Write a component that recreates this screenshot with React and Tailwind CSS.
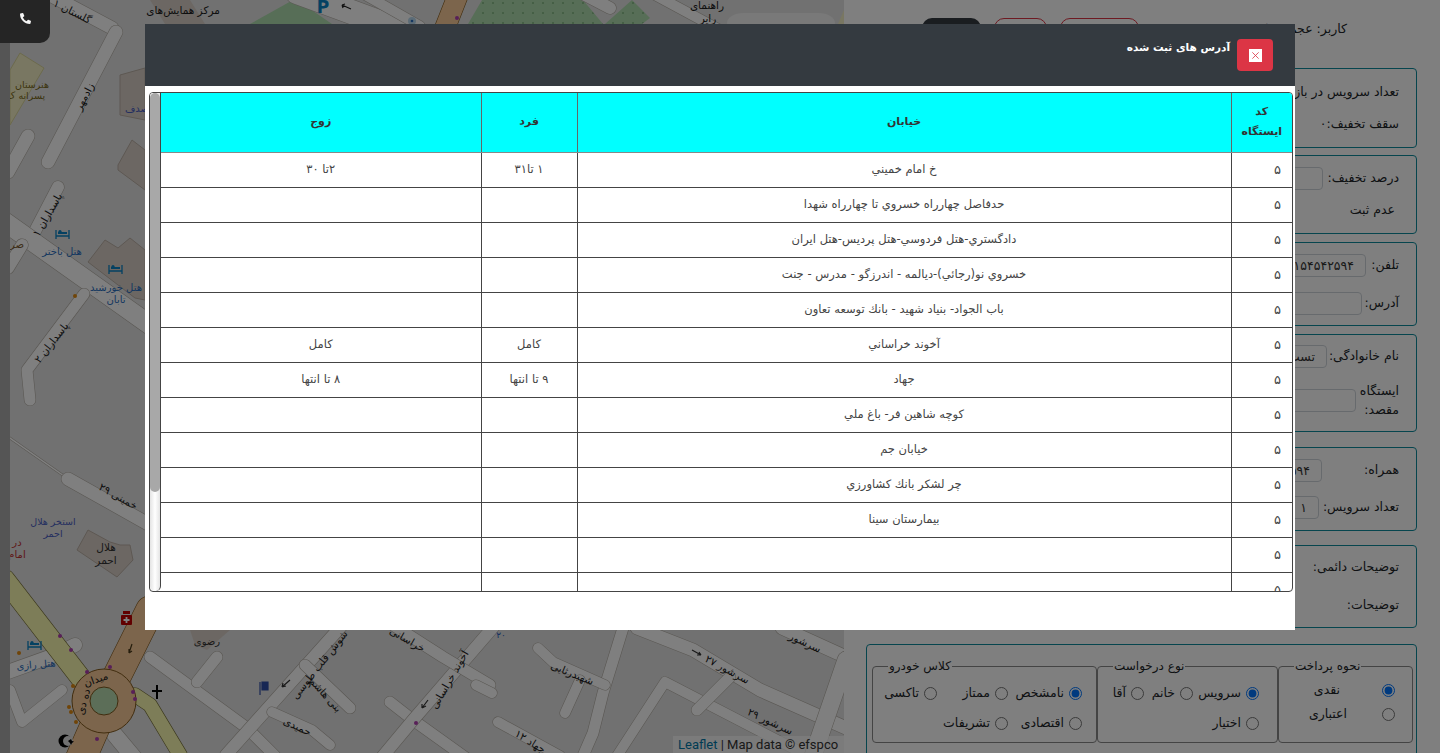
import React from "react";
import { FaPhoneAlt } from "react-icons/fa";

function Road({ d, w = 12, color = "#ffffff", casing = "#b5b0a8" }) {
  return (
    <g fill="none" strokeLinecap="round" strokeLinejoin="round">
      <path d={d} stroke={casing} strokeWidth={w + 1.2} />
      <path d={d} stroke={color} strokeWidth={w} />
    </g>
  );
}

function Label({ x, y, r = 0, size = 11, color = "#1c1c1c", children }) {
  return (
    <text
      x={x}
      y={y}
      transform={`rotate(${r} ${x} ${y})`}
      textAnchor="middle"
      dominantBaseline="middle"
      fontSize={size}
      fill={color}
      fontFamily="'DejaVu Sans', sans-serif"
    >
      {children}
    </text>
  );
}

function Bed({ x, y }) {
  return (
    <g stroke="#0a83c4" fill="none" strokeWidth="1.3">
      <path d={`M${x} ${y - 5}v9M${x + 13} ${y - 5}v9M${x} ${y + 1}h13`} />
      <rect x={x + 2} y={y - 3} width="9" height="2" fill="#0a83c4" stroke="none" />
      <circle cx={x + 4} cy={y - 3.5} r="1.6" fill="#0a83c4" stroke="none" />
    </g>
  );
}

function Dot({ x, y, c = "#b03fb0" }) {
  return <circle cx={x} cy={y} r="2" fill={c} />;
}

function MapCanvas() {
  return (
    <svg viewBox="10 0 834 753" className="block w-full h-full">
      <defs>
        <pattern id="dots" width="10" height="10" patternUnits="userSpaceOnUse">
          <rect width="10" height="10" fill="#aedcae" />
          <circle cx="3" cy="3" r="0.8" fill="#5f9a5f" />
        </pattern>
      </defs>
      <rect x="10" y="0" width="834" height="753" fill="#e2e2e2" />

      <polygon points="20,53 44,68 10,125 10,70" fill="#f2efc4" stroke="#d8d49a" />
      <polygon points="150,0 190,0 205,24 165,24" fill="#d9cfc6" />
      <polygon points="250,24 293,0 297,0 332,24" fill="#aedcae" />
      <polygon points="468,24 482,0 583,0 603,24" fill="url(#dots)" />
      <polygon points="605,24 632,0 650,18 642,24" fill="url(#dots)" />
      <polygon points="120,75 145,68 145,120 120,115" fill="#d9cfc6" stroke="#bbb0a6" />
      <polygon points="118,165 132,140 145,150 145,190 118,170" fill="#d9cfc6" stroke="#bbb0a6" />
      <polygon points="88,262 105,240 118,248 130,238 145,250 145,300 135,298" fill="#d9cfc6" stroke="#bbb0a6" />
      <polygon points="88,530 77,550 117,577 133,560 130,545 120,545 110,542" fill="#d9cfc6" stroke="#bbb0a6" />
      <polygon points="190,630 230,630 207,650 195,645" fill="#d9cfc6" />
      <polygon points="838,24 844,10 844,24" fill="#f2efc4" />

      <Road d="M50 -5L112 28" w={13} />
      <Road d="M116 32L48 162" w={13} />
      <Road d="M28 136L8 172" w={13} />
      <Road d="M58 187L33 235" w={12} />
      <Road d="M5 222L150 325" w={19} />
      <Road d="M22 245L8 268" w={12} />
      <Road d="M84 294L27 370L30 400" w={11} />
      <Road d="M10 438L64 476" w={1.5} />
      <Road d="M68 479L150 525" w={13} />
      <Road d="M5 673L55 655L75 645" w={14} />
      <Road d="M10 690L22 722L62 690" w={10} />
      <Road d="M150 657L247 728L275 756" w={11} />
      <Road d="M217 657L197 682" w={11} />
      <Road d="M226 755L345 622" w={12} />
      <Road d="M305 665L350 708" w={11} />
      <Road d="M272 712L312 730L330 745" w={10} />
      <Road d="M115 735L140 765" w={16} />
      <Road d="M390 702L413 720L480 768" w={11} />
      <Road d="M383 756L413 720L495 625" w={12} />
      <Road d="M393 625L443 657L490 685" w={11} />
      <Road d="M637 628L693 650L760 690L846 728" w={13} />
      <Road d="M782 628L846 657" w={13} />
      <Road d="M623 628L603 693L593 733L583 756" w={11} />
      <Road d="M538 648L553 662L605 685" w={10} />
      <Road d="M580 680L565 713" w={10} />
      <Road d="M476 685L492 693" w={10} />
      <Road d="M498 722L560 756" w={10} />
      <Road d="M617 756L665 682L835 770" w={10} />
      <Road d="M730 677L697 710" w={11} />
      <Road d="M846 660L813 756" w={17} />
      <Road d="M297 -8L395 28" w={24} />
      <Road d="M360 -8L420 26" w={10} />
      <Road d="M585 -5L610 8" w={12} />
      <Road d="M655 -5L720 30" w={10} />

      <Road d="M5 580L90 690" w={20} color="#fbfbb0" casing="#77703a" />
      <Road d="M135 695L150 705L180 755" w={14} color="#fbfbb0" casing="#77703a" />
      <Road d="M150 610L115 680" w={28} color="#f9cb98" casing="#825a1e" />
      <Road d="M100 715L78 765" w={30} color="#f9cb98" casing="#825a1e" />
      <Road d="M458 -5L445 28" w={20} color="#f9cb98" casing="#825a1e" />
      <circle cx="104" cy="701" r="32" fill="#f9cb98" stroke="#825a1e" strokeWidth="1" />
      <circle cx="104" cy="701" r="14" fill="#b8dcb0" stroke="#825a1e" strokeWidth="1" />

      <Dot x={60} y={636} />
      <Dot x={71} y={650} />
      <Dot x={87} y={672} />
      <Dot x={110} y={667} />
      <Dot x={133} y={692} />
      <Dot x={135} y={699} />
      <Dot x={97} y={739} />
      <Dot x={416} y={723} />
      <Dot x={457} y={18} />
      <Dot x={75} y={296} c="#e08a10" />
      <Dot x={19} y={653} c="#e08a10" />
      <Dot x={73} y={686} c="#e08a10" />
      <Dot x={69} y={707} c="#e08a10" />
      <Dot x={71} y={712} c="#e08a10" />
      <Dot x={76} y={722} c="#e08a10" />
      <circle cx="412" cy="21" r="4" fill="#b8d8ee" />
      <circle cx="412" cy="21" r="1.3" fill="#2a6ec0" />
      <Bed x={56} y={235} />
      <Bed x={109} y={270} />
      <Bed x={28} y={646} />
      <rect x="121" y="615" width="11" height="10" rx="1" fill="#c20000" />
      <rect x="123" y="611" width="7" height="3" fill="#c20000" />
      <path d="M126.5 617v6M123.5 620h6" stroke="#fff" strokeWidth="1.8" />
      <path d="M157 685v14M152 691h10" stroke="#000" strokeWidth="2" fill="none" />
      <path d="M262 682h6v8h-6zM260 682v13" stroke="#2f4fa8" fill="#2f4fa8" strokeWidth="1.2" />
      <circle cx="65" cy="741" r="6.5" fill="#000" />
      <circle cx="68" cy="741" r="5" fill="#e2e2e2" />
      <path d="M68 741l3 -2l1 2l2 .5l-2 1.5l-1 2l-1 -2z" fill="#000" />
      <text x="323" y="13" fontSize="17" fontWeight="700" fill="#0a83c4" textAnchor="middle" fontFamily="'DejaVu Sans', sans-serif">P</text>
      <path d="M342 5l9 4M342 5l3 -1M342 5l1 3" stroke="#222" fill="none" strokeWidth="1.2" />
      <path d="M132 644l-3 9M129 653l0 -4M129 653l3 -2" stroke="#4a3a1a" fill="none" strokeWidth="1.2" />
      <path d="M290 680l-8 7M282 687l1 -4M282 687l4 -1" stroke="#333" fill="none" strokeWidth="1.2" />
      <path d="M428 700l-6 8M422 708l0 -4M422 708l4 -2" stroke="#333" fill="none" strokeWidth="1.2" />
      <path d="M692 650l9 5M701 655l-4 0M701 655l-2 -3" stroke="#333" fill="none" strokeWidth="1.2" />
      <rect x="727" y="13" width="108" height="20" rx="16" fill="#f2f2f2" />

      <Label x={183} y={11} size={10.5}>مرکز همایش‌های</Label>
      <Label x={707} y={6} size={10.5}>راهنمای</Label>
      <Label x={708} y={19} size={10.5}>رایر</Label>
      <Label x={72} y={12} r={27} size={10.5}>گلستان ۱</Label>
      <Label x={85} y={97} r={-62} size={10.5}>زادمهر</Label>
      <Label x={48} y={215} r={-60} size={10.5}>پاسداران ۱</Label>
      <Label x={52} y={343} r={-52} size={10.5}>پاسداران ۲</Label>
      <Label x={32} y={85} size={9.5} color="#7a6a1a">هنرستان</Label>
      <Label x={26} y={96} size={9.5} color="#7a6a1a">پسرانه ک</Label>
      <Label x={137} y={109} size={10} color="#4a5ec0">صدف</Label>
      <Label x={62} y={252} size={10} color="#2a6ec0">هتل باختر</Label>
      <Label x={116} y={288} size={10} color="#2a6ec0">هتل خورشید</Label>
      <Label x={116} y={300} size={10} color="#2a6ec0">تابان</Label>
      <Label x={17} y={245} size={10} color="#7a5a30">صر</Label>
      <Label x={118} y={497} r={29} size={10.5}>خمینی ۲۹</Label>
      <Label x={53} y={522} size={9.5} color="#4a5ec0">استخر هلال</Label>
      <Label x={53} y={534} size={9.5} color="#4a5ec0">احمر</Label>
      <Label x={106} y={548} size={10.5} color="#333">هلال</Label>
      <Label x={106} y={561} size={10.5} color="#333">احمر</Label>
      <Label x={17} y={543} size={10} color="#c03030">در</Label>
      <Label x={17} y={555} size={10} color="#c03030">امام</Label>
      <Label x={36} y={665} r={-5} size={10} color="#2a6ec0">هتل رازی</Label>
      <Label x={96} y={680} r={-20} size={10.5}>میدان</Label>
      <Label x={84} y={702} r={-75} size={10.5}>ده دی</Label>
      <Label x={207} y={642} size={10} color="#333">رضوی</Label>
      <Label x={320} y={665} r={-52} size={10.5}>شوش قلب طوسی</Label>
      <Label x={325} y={695} r={48} size={10.5}>بنی هاشم</Label>
      <Label x={297} y={727} r={25} size={10.5}>حمیدی</Label>
      <Label x={407} y={640} r={30} size={10.5}>خراسانی</Label>
      <Label x={450} y={680} r={-60} size={10.5}>آخوند خراسانی</Label>
      <Label x={572} y={674} r={22} size={10.5}>شهیدرثایی</Label>
      <Label x={727} y={670} r={28} size={10.5}>سرشور ۲۷</Label>
      <Label x={805} y={643} r={25} size={10.5}>سرشور</Label>
      <Label x={770} y={722} r={25} size={10.5}>سرشور ۲۹</Label>
      <Label x={530} y={742} r={32} size={10.5}>جهاد ۱۲</Label>
      <Label x={501} y={635} size={9} color="#2a5ec0">۲۰</Label>
    </svg>
  );
}

function Field({ children, className }) {
  return (
    <div className={"w-full border border-[#0d8a9c] rounded-[4px] pr-[17px] overflow-hidden flex flex-col " + className}>
      {children}
    </div>
  );
}

function Input({ value, className }) {
  return (
    <div className={"h-[23px] shrink-0 border border-[#ced4da] rounded-[4px] text-[12.5px] leading-[21px] px-[11px] text-[#333] overflow-hidden whitespace-nowrap " + className}>
      {value}
    </div>
  );
}

function Radio({ label, checked, className, gap }) {
  return (
    <label className={"flex items-center leading-[16px] text-[12.5px] text-[#212529] whitespace-nowrap " + (gap || "gap-[5px]") + " " + (className || "")}>
      <input type="radio" readOnly checked={!!checked} className="m-0 w-[13px] h-[13px] shrink-0 accent-[#0075ff]" />
      <span>{label}</span>
    </label>
  );
}

function Legend({ title, className, children }) {
  return (
    <fieldset className={"min-w-0 shrink-0 border border-[#888] rounded-[4px] h-[85px] " + className}>
      <legend className="px-[1px] mr-auto ml-[15px] text-[12px] leading-[16px] text-[#212529]">{title}</legend>
      {children}
    </fieldset>
  );
}

const rows = [
  ["۵", "خ امام خميني", "۱ تا۳۱", "۲تا ۳۰"],
  ["۵", "حدفاصل چهارراه خسروي تا چهارراه شهدا", "", ""],
  ["۵", "دادگستري-هتل فردوسي-هتل پرديس-هتل ايران", "", ""],
  ["۵", "خسروي نو(رجائي)-ديالمه - اندرزگو - مدرس - جنت", "", ""],
  ["۵", "باب الجواد- بنياد شهيد - بانك توسعه تعاون", "", ""],
  ["۵", "آخوند خراساني", "كامل", "كامل"],
  ["۵", "جهاد", "۹ تا انتها", "۸ تا انتها"],
  ["۵", "كوچه شاهين فر- باغ ملي", "", ""],
  ["۵", "خيابان جم", "", ""],
  ["۵", "چر لشكر بانك كشاورزي", "", ""],
  ["۵", "بيمارستان سينا", "", ""],
  ["۵", "", "", ""],
  ["۵", "", "", ""],
];

export default function App() {
  return (
    <div dir="rtl" className="relative w-[1440px] h-[753px] overflow-hidden flex bg-white font-['DejaVu_Sans',sans-serif]">
      {/* right panel */}
      <div className="w-[596px] shrink-0 pl-[22px] pr-[23px] pt-[18px]">
        <div className="h-[50px] flex items-start justify-between">
          <div className="text-[12.5px] leading-[22px] pr-[70px] text-[#212529] whitespace-nowrap">کاربر: عجمی / کتیبه ۱</div>
          <div className="flex gap-[13px] pl-[56px]">
            <div className="w-[79px] h-[30px] border border-[#dc3545] rounded-[10px]" />
            <div className="w-[53px] h-[30px] border border-[#dc3545] rounded-[10px]" />
            <div className="w-[59px] h-[30px] bg-[#343a40] rounded-[10px]" />
          </div>
        </div>

        <div className="w-[250px] text-[12.5px] text-[#212529]">
          <Field className="h-[80px] justify-center gap-[13px]">
            <div className="whitespace-nowrap">تعداد سرویس در بازه</div>
            <div className="whitespace-nowrap">سقف تخفیف:۰</div>
          </Field>
          <Field className="h-[79px] mt-[7px] gap-[11px] pt-[11px]">
            <div className="flex items-center">
              <span className="w-[76px] whitespace-nowrap">درصد تخفیف:</span>
              <Input value="" className="w-[60px]" />
            </div>
            <div className="pr-[4px]">عدم ثبت</div>
          </Field>
          <Field className="h-[84px] mt-[8px] pt-[11px] gap-[15px]">
            <div className="flex items-center">
              <span className="w-[33px]">تلفن:</span>
              <Input value="۰۹۱۵۴۵۴۲۵۹۴" className="w-[110px]" />
            </div>
            <div className="flex items-center">
              <span className="w-[37px]">آدرس:</span>
              <Input value="" className="w-[110px]" />
            </div>
          </Field>
          <Field className="h-[98px] mt-[8px] pt-[10px] gap-[13px]">
            <div className="flex items-center">
              <span className="w-[72px] whitespace-nowrap">نام خانوادگی:</span>
              <Input value="تست" className="w-[80px]" />
            </div>
            <div className="flex items-center">
              <span className="w-[43px] leading-[19px]">ایستگاه مقصد:</span>
              <Input value="" className="w-[110px]" />
            </div>
          </Field>
          <Field className="h-[84px] mt-[15px] pt-[11px] gap-[14px]">
            <div className="flex items-center">
              <span className="w-[77px]">همراه:</span>
              <Input value="۰۹۱۵۴۵۴۲۵۹۴" className="w-[110px]" />
            </div>
            <div className="flex items-center">
              <span className="w-[80px] whitespace-nowrap">تعداد سرویس:</span>
              <Input value="۱" className="w-[40px]" />
            </div>
          </Field>
          <Field className="h-[83px] mt-[14px] justify-center gap-[19px]">
            <div>توضیحات دائمی:</div>
            <div>توضیحات:</div>
          </Field>
        </div>

        <div className="mt-[16px] h-[130px] border border-[#0d8a9c] rounded-[4px] pt-[13px] pr-[3px] pl-[5px] flex">
          <Legend title="نحوه پرداخت" className="w-[135px] pr-[17px]">
            <div className="flex flex-col gap-[8px] pt-[8px]">
              <Radio label="نقدی" checked gap="gap-[42px]" />
              <Radio label="اعتباری" gap="gap-[35px]" />
            </div>
          </Legend>
          <Legend title="نوع درخواست" className="w-[181px] pr-[18px]">
            <div className="pt-[11px] flex flex-col gap-[14px]">
              <div className="flex">
                <Radio label="سرویس" checked className="w-[66px]" />
                <Radio label="خانم" className="w-[49px]" />
                <Radio label="آقا" />
              </div>
              <Radio label="اختیار" />
            </div>
          </Legend>
          <Legend title="کلاس خودرو" className="w-[225px] pr-[14px]">
            <div className="pt-[11px] flex flex-col gap-[14px]">
              <div className="flex">
                <Radio label="نامشخص" checked className="w-[74px]" />
                <Radio label="ممتاز" className="w-[71px]" />
                <Radio label="تاکسی" />
              </div>
              <div className="flex">
                <Radio label="اقتصادی" className="w-[74px]" />
                <Radio label="تشریفات" />
              </div>
            </div>
          </Legend>
        </div>
      </div>

      {/* map */}
      <div className="relative flex-1 min-w-0 overflow-hidden">
        <MapCanvas />
        <div dir="ltr" className="absolute bottom-0 right-0 h-[17px] w-[171px] px-[5px] bg-white/70 text-[13px] leading-[17px] text-[#333] whitespace-nowrap font-['Roboto',sans-serif]">
          <span className="text-[#0078a8]">Leaflet</span> | Map data © efspco
        </div>
      </div>

      {/* left strip */}
      <div className="w-[10px] shrink-0 bg-[#aaaaaa]" />

      {/* dimming overlay */}
      <div className="absolute inset-0 bg-black/50" />

      {/* phone tab */}
      <div className="absolute top-0 left-0 w-[50px] h-[43px] bg-[#252525] rounded-br-[10px] flex items-center justify-center">
        <FaPhoneAlt className="w-[11px] h-[11px] mb-[7px] text-[#f4f4f4]" />
      </div>

      {/* modal */}
      <div className="absolute left-[145px] top-[24px] w-[1150px] h-[606px] bg-white flex flex-col">
        <div className="h-[62px] shrink-0 bg-[#343a40] flex items-start pt-[15px] pr-[22px] gap-[7px]">
          <button className="w-[36px] h-[32px] bg-[#dc3545] rounded-[4px] flex items-center justify-center">
            <span className="w-[13px] h-[13px] bg-white flex items-center justify-center">
              <svg viewBox="0 0 10 10" className="w-[9px] h-[9px]" stroke="#dc3545" strokeWidth="0.9" fill="none">
                <path d="M1.5 1.5l7 7M8.5 1.5l-7 7" />
              </svg>
            </span>
          </button>
          <div className="text-[10.5px] font-bold text-white leading-[17px]">آدرس های ثبت شده</div>
        </div>

        <div className="pt-[6px] pr-[2px] pl-[4px]">
          <div className="h-[500px] border border-[#444] rounded-[4px] overflow-hidden flex">
            <div className="flex-1 min-w-0">
              <table className="w-full table-fixed border-collapse text-[11.5px] text-[#444]">
                <colgroup>
                  <col className="w-[61px]" />
                  <col className="w-[654px]" />
                  <col className="w-[96px]" />
                  <col />
                </colgroup>
                <thead>
                  <tr className="h-[59px] bg-[#00ffff] text-[11px] text-[#333] font-bold">
                    <th className="border-l border-[#666] border-b border-b-[#888] px-[6px] leading-[20px]">کد ایستگاه</th>
                    <th className="border-l border-[#666] border-b border-b-[#888]">خیابان</th>
                    <th className="border-l border-[#666] border-b border-b-[#888]">فرد</th>
                    <th className="border-b border-b-[#888]">زوج</th>
                  </tr>
                </thead>
                <tbody>
                  {rows.map((r, i) => (
                    <tr key={i} className="h-[35px]">
                      <td className="border-l border-b border-[#444] text-right pr-[11px] text-[13px]">{r[0]}</td>
                      <td className="border-l border-b border-[#444] text-center">{r[1]}</td>
                      <td className="border-l border-b border-[#444] text-center">{r[2]}</td>
                      <td className="border-b border-[#444] text-center">{r[3]}</td>
                    </tr>
                  ))}
                </tbody>
              </table>
            </div>
            <div className="w-[11px] shrink-0 border-r border-[#444] bg-gradient-to-r from-[#e4e4e4] via-white to-[#e4e4e4] rounded-b-[5px]">
              <div className="h-[399px] bg-[#a8a8a8] rounded-[5px]" />
            </div>
          </div>
        </div>
      </div>
    </div>
  );
}
